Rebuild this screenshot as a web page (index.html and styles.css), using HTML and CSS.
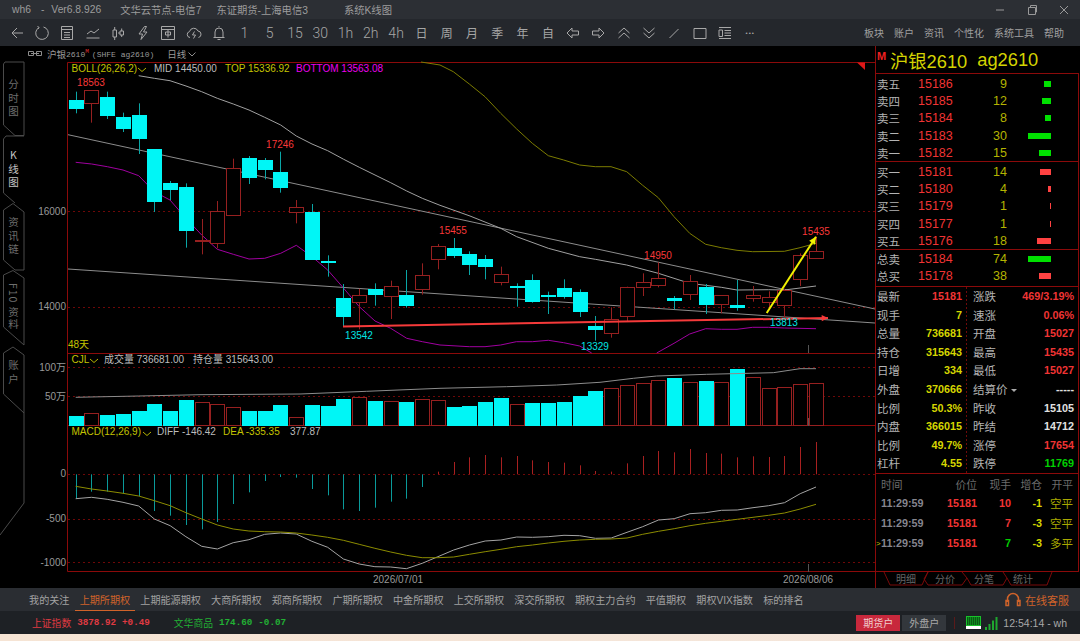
FILE: index.html
```html
<!DOCTYPE html>
<html lang="zh-CN">

<head>
    <meta charset="UTF-8">
    <meta name="viewport" content="width=device-width, initial-scale=1.0">
    <title>wh6 - 系统K线图</title>
    <link rel="stylesheet" href="styles.css">
</head>

<body>
    <div class="app">
        <header class="titlebar">
            <span class="app-name">wh6</span>
            <span class="app-dash">-</span>
            <span class="app-ver">Ver6.8.926</span>
            <span class="app-node">文华云节点-电信7</span>
            <span class="app-broker">东证期货-上海电信3</span>
            <span class="app-view">系统K线图</span>
            <div class="window-btns">
                <svg width="12" height="12" viewBox="0 0 12 12"><path d="M2 6h8" /></svg>
                <svg width="12" height="12" viewBox="0 0 12 12"><path d="M2.500 3.500h7v7h-7z M4.500 3.500v-2h6v6.500h-1" /></svg>
                <svg width="12" height="12" viewBox="0 0 12 12"><path d="M2 2l8 8M10 2l-8 8" /></svg>
            </div>
        </header>

        <nav class="toolbar">
            <a class="tool"><svg viewBox="0 0 16 16"><path d="M14 8H3M8 3 3 8l5 5" /></svg></a>
            <a class="tool"><svg viewBox="0 0 16 16"><path d="M5 2.600A6.300 6.300 0 1 0 9.500 2M3.500 1l1.500 1.600-1 1.400" /></svg></a>
            <a class="tool"><svg viewBox="0 0 16 16"><path d="M2.500 1.500h11v13h-11zM2.500 4.500h11M5 7.500h6M5 10h6M5 12.500h6" /></svg></a>
            <a class="tool"><svg viewBox="0 0 16 16"><path d="M2 9l4-3 3 2 5-4M1.500 13h13" /></svg></a>
            <a class="tool"><svg viewBox="0 0 16 16"><path d="M3 5h3.500v7H3zM4.700 2v3M4.700 12v3M10 6h3.500v4H10zM8 8h2M11.700 3.500V6M11.700 10v2" /></svg></a>
            <a class="tool"><svg viewBox="0 0 16 16"><path d="M9.500 1.500 4 9h3.500l-1.500 5.500L12 7H8.500l3-5.500z" /></svg></a>
            <a class="tool"><svg viewBox="0 0 16 16"><path d="M1.500 1.500h13v13h-13zM1.500 4.500h13M8 4.500v8M5.500 7h5v3h-5z" /></svg></a>
            <a class="tool"><svg viewBox="0 0 16 16"><path d="M4 12.500A3 3 0 0 1 3.500 6.600 4.500 4.500 0 0 1 12 6a3.300 3.300 0 0 1 .5 6.500M8.500 6.500 6.500 10h3L7.500 13.500" /></svg></a>
            <a class="tool"><svg viewBox="0 0 16 16"><path d="M4 12V7a4 4 0 0 1 8 0v5M2.500 12.500h11M6.500 14.500h3M8 2V1.200" /></svg></a>
            <a class="tool period">1</a>
            <a class="tool period">5</a>
            <a class="tool period">15</a>
            <a class="tool period">30</a>
            <a class="tool period">1h</a>
            <a class="tool period">2h</a>
            <a class="tool period">4h</a>
            <a class="tool cycle">日</a>
            <a class="tool cycle">周</a>
            <a class="tool cycle">月</a>
            <a class="tool cycle">季</a>
            <a class="tool cycle">年</a>
            <a class="tool cycle">自</a>
            <a class="tool"><svg viewBox="0 0 16 16"><path d="M7 3 2 8l5 5v-3h6.500V6H7z" /></svg></a>
            <a class="tool"><svg viewBox="0 0 16 16"><path d="M9 3l5 5-5 5v-3H2.500V6H9z" /></svg></a>
            <a class="tool"><svg viewBox="0 0 16 16"><path d="M2.500 8 8 3l5.500 5M2.500 13 8 8l5.500 5" /></svg></a>
            <a class="tool"><svg viewBox="0 0 16 16"><path d="M2.500 3 8 8l5.500-5M2.500 8 8 13l5.500-5" /></svg></a>
            <a class="tool"><svg viewBox="0 0 16 16"><path d="M3.500 13 12.500 4" /></svg></a>
            <a class="tool"><svg viewBox="0 0 16 16"><path d="M2 3.500h12v10H2z" /></svg></a>
            <a class="tool"><svg viewBox="0 0 16 16"><path d="M2 2.500h12M2 13.500h12M2 5v6.500h3.500V5zM7.500 5.500H14M7.500 8H14M7.500 10.500H14" /></svg></a>
            <a class="tool dots">•••</a>
            <div class="menu">
                <a>板块</a><a>账户</a><a>资讯</a><a>个性化</a><a>系统工具</a><a>帮助</a>
            </div>
        </nav>

        <main class="workspace">
            <section class="chart-area">
                <svg id="chart" class="chart-canvas" width="875" height="542" viewBox="0 46 875 542"></svg>
                <div class="symbol-bar">
                    <svg class="link-icon" width="14" height="8" viewBox="0 0 14 8"><path d="M.5 1.500h5v4h-5zM8.500 1.500h5v4h-5zM3 3.500h8" /></svg>
                    <span class="cn">沪银</span><span>2610</span><span class="m-flag">M</span>
                    <span class="sym-code">(SHFE ag2610)</span>
                    <span class="cn period-name">日线</span>
                    <svg class="chev" width="8" height="5" viewBox="0 0 8 5"><path d="M.5.500 4 4 7.500.500" /></svg>
                </div>
                <div class="side-tabs">
                    <div class="side-tab tab-1">分时图</div>
                    <div class="side-tab tab-2 active">K线图</div>
                    <div class="side-tab tab-3">资讯链</div>
                    <div class="side-tab tab-4">F10 资料</div>
                    <div class="side-tab tab-5">账户</div>
                </div>
            </section>

            <aside class="quote">
                <div class="quote-title"><b class="m-mark">M</b><span>沪银2610</span><span>ag2610</span></div>

                <div class="book">
                    <div class="book-row"><span>卖五</span><span class="red">15186</span><span class="yel">9</span><i class="bar g" style="width:7px"></i></div>
                    <div class="book-row"><span>卖四</span><span class="red">15185</span><span class="yel">12</span><i class="bar g" style="width:9px"></i></div>
                    <div class="book-row"><span>卖三</span><span class="red">15184</span><span class="yel">8</span><i class="bar g" style="width:6px"></i></div>
                    <div class="book-row"><span>卖二</span><span class="red">15183</span><span class="yel">30</span><i class="bar g" style="width:23px"></i></div>
                    <div class="book-row"><span>卖一</span><span class="red">15182</span><span class="yel">15</span><i class="bar g" style="width:12px"></i></div>
                </div>
                <div class="book">
                    <div class="book-row"><span>买一</span><span class="red">15181</span><span class="yel">14</span><i class="bar r" style="width:11px"></i></div>
                    <div class="book-row"><span>买二</span><span class="red">15180</span><span class="yel">4</span><i class="bar r" style="width:3px"></i></div>
                    <div class="book-row"><span>买三</span><span class="red">15179</span><span class="yel">1</span><i class="bar r" style="width:1px"></i></div>
                    <div class="book-row"><span>买四</span><span class="red">15177</span><span class="yel">1</span><i class="bar r" style="width:1px"></i></div>
                    <div class="book-row"><span>买五</span><span class="red">15176</span><span class="yel">18</span><i class="bar r" style="width:14px"></i></div>
                </div>
                <div class="book book-total">
                    <div class="book-row"><span>总卖</span><span class="red">15184</span><span class="yel">74</span><i class="bar g" style="width:23px"></i></div>
                    <div class="book-row"><span>总买</span><span class="red">15178</span><span class="yel">38</span><i class="bar r" style="width:12px"></i></div>
                </div>

                <div class="stats">
                    <div class="stat"><span>最新</span><b class="red">15181</b></div>
                    <div class="stat"><span>涨跌</span><b class="red">469/3.19%</b></div>
                    <div class="stat"><span>现手</span><b class="lime">7</b></div>
                    <div class="stat"><span>速涨</span><b class="red">0.06%</b></div>
                    <div class="stat"><span>总量</span><b class="lime">736681</b></div>
                    <div class="stat"><span>开盘</span><b class="red">15027</b></div>
                    <div class="stat"><span>持仓</span><b class="lime">315643</b></div>
                    <div class="stat"><span>最高</span><b class="red">15435</b></div>
                    <div class="stat"><span>日增</span><b class="lime">334</b></div>
                    <div class="stat"><span>最低</span><b class="red">15027</b></div>
                    <div class="stat"><span>外盘</span><b class="lime">370666</b></div>
                    <div class="stat"><span>结算价<i class="caret"></i></span><b class="white">-----</b></div>
                    <div class="stat"><span>比例</span><b class="lime">50.3%</b></div>
                    <div class="stat"><span>昨收</span><b class="white">15105</b></div>
                    <div class="stat"><span>内盘</span><b class="lime">366015</b></div>
                    <div class="stat"><span>昨结</span><b class="white">14712</b></div>
                    <div class="stat"><span>比例</span><b class="lime">49.7%</b></div>
                    <div class="stat"><span>涨停</span><b class="red">17654</b></div>
                    <div class="stat"><span>杠杆</span><b class="lime">4.55</b></div>
                    <div class="stat"><span>跌停</span><b class="green">11769</b></div>
                </div>

                <div class="ticks">
                    <div class="tick-head"><span>时间</span><span>价位</span><span>现手</span><span>增仓</span><span>开平</span></div>
                    <div class="tick-row"><b class="tick-time">11:29:59</b><b class="red">15181</b><b class="red">10</b><b class="lime">-1</b><span class="kp">空平</span></div>
                    <div class="tick-row"><b class="tick-time">11:29:59</b><b class="red">15181</b><b class="red">7</b><b class="lime">-3</b><span class="kp">空平</span></div>
                    <div class="tick-row"><em class="tick-mark">&gt;</em><b class="tick-time">11:29:59</b><b class="red">15181</b><b class="green">7</b><b class="lime">-3</b><span class="kp">多平</span></div>
                </div>

                <div class="detail-tabs">
                    <svg class="detail-outline" width="205" height="16" viewBox="0 0 205 16"><path d="M8 0l6 13h32l6-13M52 0l-4 7 4 6h34l5-7M86 0l5 6 4 7h32l4-7M127 0l4 6 4 7h36l5-13" /></svg>
                    <span>明细</span><span>分价</span><span>分笔</span><span>统计</span>
                </div>
            </aside>
        </main>

        <nav class="market-tabs">
            <a>我的关注</a>
            <a class="on">上期所期权</a>
            <a>上期能源期权</a>
            <a>大商所期权</a>
            <a>郑商所期权</a>
            <a>广期所期权</a>
            <a>中金所期权</a>
            <a>上交所期权</a>
            <a>深交所期权</a>
            <a>期权主力合约</a>
            <a>平值期权</a>
            <a>期权VIX指数</a>
            <a>标的排名</a>
            <div class="online">
                <svg width="16" height="16" viewBox="0 0 16 16"><path d="M2.500 10V7a5.500 5.500 0 0 1 11 0v3M1 8.500h2.500v5H1zM12.500 8.500H15v5h-2.500z" /></svg>
                <span>在线客服</span>
            </div>
        </nav>

        <footer class="statusbar">
            <div class="ticker up"><span class="cn">上证指数</span><span>3878.92</span><span>+0.49</span></div>
            <div class="ticker down"><span class="cn">文华商品</span><span>174.60</span><span>-0.07</span></div>
            <div class="status-right">
                <a class="acct on">期货户</a>
                <a class="acct">外盘户</a>
                <i class="status-sep"></i>
                <i class="monitor"></i>
                <svg class="signal" width="13" height="14" viewBox="0 0 13 14"><path d="M0 11h2v3H0zM3.500 8h2v6h-2zM7 4.500h2V14H7zM10.500 1h2v13h-2z" /></svg>
                <span class="clock">12:54:14 - wh</span>
            </div>
        </footer>
        <div class="desktop-strip"></div>
    </div>
    <script src="chart.js"></script>
</body>

</html>
```

FILE: styles.css
```css
* {
    box-sizing: border-box;
}

html,
body {
    margin: 0;
    height: 100%;
    background: #000;
    overflow: hidden;
}

body {
    font-family: "Liberation Sans", "Noto Sans CJK SC", sans-serif;
    color: #aaa;
}

a {
    cursor: pointer;
}

.app {
    display: flex;
    flex-direction: column;
    width: 1080px;
    height: 641px;
}

/* title bar */
.titlebar {
    display: flex;
    align-items: center;
    height: 19px;
    padding-left: 12px;
    background: #2c2f34;
    font-size: 10.300px;
    color: #9c9c9c;
    flex: none;
}

.app-dash {
    margin-left: 10px;
}

.app-ver {
    margin-left: 7px;
}

.app-node {
    margin-left: 19px;
}

.app-broker {
    margin-left: 15px;
}

.app-view {
    margin-left: 36px;
}

.window-btns {
    display: flex;
    gap: 20px;
    margin-left: auto;
    padding-right: 10px;
}

.window-btns svg {
    fill: none;
    stroke: #999;
}

/* tool bar */
.toolbar {
    display: flex;
    align-items: center;
    height: 27px;
    padding-left: 4px;
    background: #24272c;
    flex: none;
}

.tool {
    display: flex;
    align-items: center;
    justify-content: center;
    width: 25.3px;
    height: 27px;
    flex: none;
    color: #a6a6a6;
}

.tool svg {
    width: 16px;
    height: 16px;
    fill: none;
    stroke: #a8a8a8;
}

.period {
    font-family: Roboto, sans-serif;
    font-weight: 300;
    font-size: 14px;
}

.cycle {
    font-size: 12px;
}

.dots {
    font-size: 6px;
    letter-spacing: 1px;
}

.menu {
    display: flex;
    gap: 10px;
    margin-left: auto;
    padding-right: 16px;
    font-size: 10px;
    color: #a0a0a0;
}

/* main */
.workspace {
    display: flex;
    height: 542px;
    flex: none;
    background: #000;
}

.chart-area {
    position: relative;
    width: 875px;
    flex: none;
}

.chart-canvas {
    position: absolute;
    left: 0;
    top: 0;
    font-family: "Liberation Sans", "Noto Sans CJK SC", sans-serif;
}

.chart-canvas text {
    font-size: 10px;
    dominant-baseline: middle;
}

.t-grey { fill: #bcbcbc; }
.t-axis { fill: #999; }
.t-yellow { fill: #c4c400; }
.t-magenta { fill: #ee00ee; }
.t-red { fill: #f83838; }
.t-cyan { fill: #00e4e4; }

.symbol-bar {
    position: relative;
    display: flex;
    align-items: center;
    height: 16px;
    padding-left: 28px;
    font-family: "Liberation Mono", "Noto Sans CJK SC", monospace;
    font-size: 8px;
    color: #999;
}

.link-icon {
    margin-right: 5px;
    fill: none;
    stroke: #8c8c8c;
}

.symbol-bar .cn {
    font-family: "Noto Sans CJK SC", sans-serif;
    font-size: 9.5px;
}

.m-flag {
    position: relative;
    top: -3px;
    font-size: 6px;
    color: #e03030;
    margin-right: 3px;
}

.period-name {
    margin-left: 13px;
}

.chev {
    margin-left: 2px;
    fill: none;
    stroke: #8c8c8c;
}

/* left vertical tabs */
.side-tabs {
    position: absolute;
    left: 3px;
    top: 0;
    width: 21px;
    font-family: "Noto Sans CJK SC", sans-serif;
    font-size: 10.5px;
    color: #6e6e6e;
}

.side-tab {
    position: absolute;
    left: 0;
    width: 21px;
    writing-mode: vertical-rl;
    text-orientation: upright;
    line-height: 21px;
    letter-spacing: 3px;
    white-space: nowrap;
}

.side-tab.active {
    color: #c4c4c4;
}

.tab-1 { top: 33px; }
.tab-2 { top: 104px; }
.tab-3 { top: 171px; }
.tab-4 {
    top: 237px;
    text-orientation: mixed;
    letter-spacing: 1px;
}
.tab-5 { top: 314px; }

/* right quote panel */
.quote {
    display: flex;
    flex-direction: column;
    width: 205px;
    border-left: 1px solid #8b0a0a;
    font-size: 11px;
    color: #bdbdbd;
}

.red { color: #f03434; }
.yel { color: #b4b400; }
.lime { color: #d6d600; }
.white { color: #e0e0e0; }
.green { color: #00d000; }

.quote-title {
    position: relative;
    display: flex;
    align-items: center;
    gap: 10px;
    height: 27px;
    padding: 1px 0 0 14px;
    font-family: "Liberation Sans", "Noto Sans CJK SC", sans-serif;
    font-size: 18.300px;
    color: #d4d400;
}

.m-mark {
    position: absolute;
    left: 1px;
    top: 4px;
    font-size: 11px;
    color: #ee2020;
}

.book {
    width: 203px;
    height: 88px;
    padding-top: 1px;
    border-top: 1px solid #8b0a0a;
    border-right: 1px solid #8b0a0a;
}

.book-total {
    height: 37px;
    padding-top: 0;
}

.book-row {
    display: grid;
    grid-template-columns: 41px 36px 53px 44px;
    align-items: center;
    height: 17.400px;
    padding-left: 1px;
    font-size: 12.500px;
}

.book-row span:first-child {
    font-size: 11.500px;
    font-family: "Noto Sans CJK SC", sans-serif;
    color: #b4b4b4;
}

.book-row span:nth-child(3) {
    text-align: right;
}

.bar {
    justify-self: end;
    height: 6px;
}

.bar.g { background: #00e000; }
.bar.r { background: #ff4242; }

.stats {
    position: relative;
    display: grid;
    grid-template-columns: 91px 111px;
    grid-auto-rows: 18.550px;
    width: 203px;
    height: 187px;
    border-top: 1px solid #8b0a0a;
    border-right: 1px solid #8b0a0a;
    background: repeating-linear-gradient(#6e0a0a 0 2px, transparent 2px 4px) 90px 0 / 1px 100% no-repeat;
}

.stat {
    display: flex;
    align-items: center;
    justify-content: space-between;
    padding: 0 5px 0 1px;
    font-size: 10.800px;
}

.stat:nth-child(even) {
    padding: 0 4px 0 6px;
}

.stat span {
    font-family: "Noto Sans CJK SC", sans-serif;
    font-size: 11.500px;
    color: #b4b4b4;
}

.caret {
    display: inline-block;
    margin-left: 3px;
    border: 3px solid transparent;
    border-top: 3px solid #aaa;
    border-bottom: 0;
    vertical-align: middle;
}

.ticks {
    width: 203px;
    height: 99px;
    border-top: 1px solid #8b0a0a;
    border-right: 1px solid #8b0a0a;
    border-bottom: 1px solid #8b0a0a;
}

.tick-head,
.tick-row {
    position: relative;
    display: grid;
    grid-template-columns: 46px 50px 34px 31px 31px;
    align-items: center;
    padding-left: 5px;
    height: 20px;
    font-size: 10.800px;
}

.tick-head span,
.tick-row > :not(.tick-time) {
    text-align: right;
}

.tick-head {
    height: 19px;
    font-family: "Noto Sans CJK SC", sans-serif;
    color: #6c6c6c;
}

.tick-head span:first-child {
    text-align: left;
}

.tick-time {
    color: #85858f;
}

.kp {
    font-family: "Noto Sans CJK SC", sans-serif;
    font-size: 11.500px;
    color: #a8a800;
}

.tick-row .tick-mark {
    position: absolute;
    left: 0;
    font-style: normal;
    font-size: 8px;
    color: #c8c800;
}

.detail-tabs {
    position: relative;
    display: flex;
    height: 16px;
    padding-left: 20px;
    font-family: "Noto Sans CJK SC", sans-serif;
    font-size: 10px;
    line-height: 14px;
    color: #666;
}

.detail-tabs span {
    position: relative;
    width: 39px;
}

.detail-outline {
    position: absolute;
    left: 0;
    top: 0;
    fill: none;
    stroke: #7a0a0a;
}

/* exchange tabs */
.market-tabs {
    display: flex;
    align-items: stretch;
    height: 23px;
    padding-left: 24px;
    background: #2a2d32;
    font-size: 10.100px;
    color: #a2a2a2;
    flex: none;
}

.market-tabs > a {
    display: flex;
    align-items: center;
    padding: 0 5.100px;
    white-space: nowrap;
}

.market-tabs > a.on {
    color: #d0632a;
    border-bottom: 1px solid #d0632a;
}

.online {
    display: flex;
    align-items: center;
    gap: 4px;
    margin-left: auto;
    padding-right: 11px;
    font-size: 11px;
    color: #d0632a;
}

.online svg {
    fill: none;
    stroke: #d0632a;
    stroke-width: 1.500;
}

/* status bar */
.statusbar {
    display: flex;
    align-items: center;
    height: 23px;
    padding-left: 32px;
    background: #1e2125;
    flex: none;
    font-family: "Liberation Mono", "Noto Sans CJK SC", monospace;
    font-size: 9.250px;
    font-weight: bold;
}

.ticker {
    display: flex;
    align-items: center;
    gap: 6px;
}

.ticker .cn {
    font-family: "Noto Sans CJK SC", sans-serif;
    font-size: 9.800px;
    font-weight: normal;
}

.ticker.up { color: #e03a42; }
.ticker.down {
    margin-left: 24px;
    color: #22b034;
}

.status-right {
    display: flex;
    align-items: center;
    margin-left: auto;
    font-weight: normal;
}

.acct {
    display: flex;
    align-items: center;
    justify-content: center;
    width: 44px;
    height: 16px;
    margin-right: 2px;
    background: #33373c;
    font-family: "Noto Sans CJK SC", sans-serif;
    font-size: 10px;
    color: #a8a8a8;
}

.acct.on {
    background: #c8283c;
    color: #f0d0d0;
}

.status-sep {
    width: 1px;
    height: 12px;
    margin: 0 11px 0 6px;
    background: #5a1a1a;
}

.monitor {
    width: 15px;
    height: 13px;
    border-bottom: 3px solid #fff;
    background: repeating-linear-gradient(90deg, #0f8a1e 0 1px, #0a5a14 1px 2px);
    box-shadow: inset 0 0 0 1px #17c22a;
}

.signal {
    margin-left: 4px;
    fill: #1fa82f;
}

.clock {
    margin: 0 13px 0 5px;
    font-family: "Liberation Sans", sans-serif;
    font-size: 10.500px;
    color: #a8a8a8;
}

.desktop-strip {
    flex: 1;
    background: linear-gradient(90deg, #f6e4d4, #f4e6dc);
}
```

FILE: chart.js
```js
const svg = document.getElementById("chart");
const STEP = 15.75;
const FIRST_X = 75.7;
const RED_EDGE = "#962020";
const candleX = i => FIRST_X + i * STEP;
// sampled values are in thirds of a pixel, measured from the panel top
const py = v => 60 + v / 3;
const vy = v => 340 + v / 3;

// [wick top, body top, body bottom, wick bottom, up?]
const candles = [
    [95, 120, 143, 160, 0], [90, 90, 130, 188, 1], [95, 110, 164, 177, 0], [158, 171, 205, 216, 0],
    [130, 164, 232, 282, 0], [268, 268, 425, 456, 0], [363, 369, 387, 420, 0], [370, 381, 509, 563, 0],
    [477, 539, 541, 583, 1], [423, 454, 551, 565, 1], [296, 325, 465, 465, 1], [288, 294, 350, 372, 0],
    [294, 301, 328, 358, 0], [275, 337, 382, 398, 0], [420, 442, 456, 490, 1], [432, 456, 597, 597, 0],
    [586, 603, 605, 650, 0], [672, 713, 767, 800, 0], [686, 706, 726, 808, 1], [670, 687, 701, 737, 0],
    [662, 679, 710, 777, 1], [630, 705, 734, 743, 0], [610, 644, 686, 704, 1], [552, 559, 599, 628, 1],
    [534, 565, 585, 594, 0], [574, 583, 613, 645, 0], [585, 597, 617, 658, 0], [620, 643, 668, 676, 1],
    [670, 678, 680, 740, 0], [643, 659, 722, 728, 0], [695, 706, 709, 762, 0], [658, 685, 708, 716, 0],
    [688, 695, 753, 771, 0], [768, 799, 809, 842, 0], [742, 778, 819, 833, 1], [680, 682, 769, 785, 1],
    [640, 667, 682, 708, 1], [607, 655, 676, 682, 1], [708, 714, 721, 748, 0], [645, 663, 701, 720, 1],
    [672, 680, 732, 762, 0], [706, 706, 734, 760, 1], [660, 734, 740, 752, 0], [678, 706, 714, 725, 1],
    [694, 712, 728, 748, 1], [686, 690, 734, 775, 1], [580, 585, 657, 678, 1], [530, 574, 596, 596, 1]
];

// [bar top, up?]
const volumes = [
    [229, 0], [220, 1], [225, 0], [222, 0], [212, 0], [192, 0], [212, 0], [180, 0], [187, 1], [193, 1],
    [201, 1], [212, 0], [214, 0], [195, 0], [231, 1], [195, 0], [198, 0], [178, 0], [170, 1], [183, 0],
    [184, 1], [185, 0], [178, 1], [181, 1], [202, 0], [197, 0], [187, 0], [174, 0], [193, 1], [189, 0],
    [190, 0], [185, 0], [168, 0], [152, 0], [143, 1], [136, 1], [130, 1], [121, 1], [114, 0], [127, 1],
    [122, 0], [127, 1], [86, 0], [112, 1], [144, 1], [142, 1], [133, 1], [128, 1]
];

const macdBars = [
    475, 455, 455, 460, 468, 513, 527, 555, 568, 546, 492, 457, 423, 411, 413, 447, 466, 508, 513, 503, 485, 476, 441, 395,
    366, 352, 345, 352, 348, 361, 366, 368, 376, 393, 395, 370, 348, 333, 337, 327, 339, 341, 352, 349, 351, 348, 321, 306
];

const diffLine = [
    476, 472, 478, 487, 498, 537, 557, 590, 619, 627, 608, 599, 583, 579, 582, 604, 622, 657, 672, 680, 681, 686, 670, 650,
    630, 615, 603, 600, 591, 592, 590, 586, 587, 595, 594, 577, 560, 540, 536, 521, 518, 511, 510, 503, 497, 488, 461, 441
];

const deaLine = [
    439, 447, 453, 460, 468, 482, 497, 518, 537, 555, 567, 573, 575, 576, 579, 585, 592, 601, 613, 625, 636, 646, 653, 653,
    651, 643, 635, 628, 620, 615, 609, 604, 600, 598, 597, 594, 583, 574, 566, 557, 550, 544, 538, 532, 526, 519, 507, 493
];

// [x, y] in thirds of a pixel, left and right half of the chart
const midLine = [
    [416, 47], [463, 55], [510, 62], [558, 78], [605, 95], [652, 115], [700, 132], [747, 150], [794, 172], [842, 195],
    [889, 228], [936, 252], [983, 272], [1031, 298], [1078, 322], [1125, 345], [1172, 368], [1220, 393], [1267, 415], [1320, 436]
];
const midLine2 = [
    [0, 436], [90, 468], [182, 505], [230, 530], [325, 565], [419, 590], [466, 598], [560, 615], [655, 640], [702, 655],
    [749, 670], [844, 682], [891, 690], [985, 689], [1033, 690], [1128, 678]
];
const topLine2 = [
    [-57, 6], [0, 15], [40, 35], [88, 72], [135, 110], [182, 160], [230, 207], [277, 250], [325, 287], [371, 300], [419, 315],
    [466, 320], [513, 320], [560, 335], [607, 375], [655, 413], [702, 470], [749, 520], [797, 553], [844, 563], [891, 571],
    [938, 575], [1033, 574], [1080, 563], [1128, 550]
];
const bottomLine = [
    [227, 307], [275, 312], [322, 320], [369, 330], [416, 347], [463, 395], [510, 420], [558, 475], [605, 525], [652, 568],
    [700, 583], [747, 597], [794, 595], [842, 580], [889, 556], [936, 590], [983, 630], [1031, 685], [1078, 740], [1125, 783],
    [1172, 805], [1220, 835], [1267, 845], [1320, 855]
];
const bottomLine2a = [[0, 855], [88, 860], [135, 860], [182, 855], [229, 845], [277, 845], [325, 841], [371, 848], [419, 858], [455, 879]];
const bottomLine2b = [
    [650, 879], [702, 850], [749, 822], [797, 806], [844, 808], [891, 808], [938, 802], [985, 802], [1033, 804], [1128, 806]
];
const volLine = [
    [227, 172], [416, 168], [600, 164], [900, 162], [1100, 154], [1320, 145]
];
const volLine2 = [
    [0, 145], [200, 140], [350, 135], [480, 127], [580, 115], [650, 108], [800, 103], [1000, 98], [1080, 86], [1128, 86]
];

let out = "";

function poly(points, color, width) {
    const d = points.map(p => p[0].toFixed(1) + "," + p[1].toFixed(1)).join(" ");
    out += `<polyline points="${d}" fill="none" stroke="${color}" stroke-width="${width || 1}"/>`;
}

function label(x, y, str, cls, anchor) {
    out += `<text x="${x}" y="${y}" class="${cls}" text-anchor="${anchor || "start"}">${str}</text>`;
}

const left = pts => pts.map(p => [p[0] / 3, py(p[1])]);
const right = pts => pts.map(p => [440 + p[0] / 3, py(p[1])]);
const volLeft = pts => pts.map(p => [p[0] / 3, vy(p[1])]);
const volRight = pts => pts.map(p => [440 + p[0] / 3, vy(p[1])]);
const series = arr => arr.map((v, i) => [candleX(i), vy(v)]);

function drawSideTabs() {
    const tabs = [
        "M3.500 64V125L15 135.500H24V62H5z",
        "M24 136H6L3.500 139V193L15 203",
        "M3.500 210 13 203.500 24 212V270H15L3.500 260z",
        "M3.500 275 13 270.500 24 278V345L3.500 327z",
        "M3.500 353 13 347 24 355V413L3.500 394z",
        "M24 413V503L0 535"
    ];
    out += `<path d="${tabs.join("")}" fill="none" stroke="#4a4a4a"/>`;
}

function drawFrame() {
    const dash = 'stroke="#6e0808" stroke-dasharray="2 3"';
    [211.5, 307.5, 367.5, 396.5, 474.5, 519.5, 562.5].forEach(y => {
        out += `<line x1="68" y1="${y}" x2="875" y2="${y}" ${dash}/>`;
    });
    const frame = 'stroke="#8b0a0a"';
    out += `<path d="M67.500 62.500H875M67.500 62.500V571.500H875M68 353.500H875M68 425.500H875" fill="none" ${frame}/>`;
    out += '<path d="M857 62.500H865V70z" fill="#e01818"/>';
    out += '<path d="M808.500 345V353M808.500 418V426M808.500 564V572" stroke="#555"/>';
}

function drawCandles() {
    candles.forEach((c, i) => {
        const x = Math.round(candleX(i)) + 0.5;
        const up = c[4];
        const wick = up ? RED_EDGE : "#0aa6a6";
        out += `<line x1="${x}" y1="${py(c[0])}" x2="${x}" y2="${py(c[3])}" stroke="${wick}"/>`;
        const top = Math.round(py(c[1])) + 0.5;
        const h = Math.max(1, Math.round((c[2] - c[1]) / 3));
        const fill = up ? "#000" : "#00f6f6";
        const edge = up ? RED_EDGE : "#00f6f6";
        out += `<rect x="${x - 7}" y="${top}" width="14" height="${h}" fill="${fill}" stroke="${edge}"/>`;
    });
}

function drawVolumes() {
    volumes.forEach((v, i) => {
        const x = Math.round(candleX(i)) + 0.5;
        const top = Math.round(vy(v[0])) + 0.5;
        const fill = v[1] ? "#000" : "#00f6f6";
        const edge = v[1] ? RED_EDGE : "#00f6f6";
        out += `<rect x="${x - 7}" y="${top}" width="14" height="${425.5 - top}" fill="${fill}" stroke="${edge}"/>`;
    });
}

function drawMacd() {
    const zero = vy(403);
    macdBars.forEach((v, i) => {
        const x = Math.round(candleX(i)) + 0.5;
        const color = v > 403 ? "#0a9a9a" : "#a82020";
        out += `<line x1="${x}" y1="${zero}" x2="${x}" y2="${vy(v)}" stroke="${color}"/>`;
    });
    poly(series(diffLine), "#a4a4a4");
    poly(series(deaLine), "#8c8c00");
}

function drawArrow(x1, y1, x2, y2, color, width, size) {
    out += `<line x1="${x1}" y1="${y1}" x2="${x2}" y2="${y2}" stroke="${color}" stroke-width="${width}"/>`;
    const a = Math.atan2(y2 - y1, x2 - x1);
    const p1 = [x2 - size * Math.cos(a - 0.45), y2 - size * Math.sin(a - 0.45)];
    const p2 = [x2 - size * Math.cos(a + 0.45), y2 - size * Math.sin(a + 0.45)];
    out += `<polygon points="${x2},${y2} ${p1.join(",")} ${p2.join(",")}" fill="${color}"/>`;
}

function drawTexts() {
    label(71.5, 69, "BOLL(26,26,2)", "t-yellow");
    label(154, 69, "MID 14450.00", "t-grey");
    label(225, 69, "TOP 15336.92", "t-yellow");
    label(296, 69, "BOTTOM 13563.08", "t-magenta");

    label(71.5, 360, "CJL", "t-yellow");
    label(104, 360, "成交量 736681.00", "t-grey");
    label(193, 360, "持仓量 315643.00", "t-grey");

    label(71.5, 432.5, "MACD(12,26,9)", "t-yellow");
    label(157, 432.5, "DIFF -146.42", "t-grey");
    label(223, 432.5, "DEA -335.35", "t-yellow");
    label(290, 432.5, "377.87", "t-grey");

    label(66, 212, "16000", "t-axis", "end");
    label(66, 307.5, "14000", "t-axis", "end");
    label(66, 368, "100万", "t-axis", "end");
    label(66, 397, "50万", "t-axis", "end");
    label(66, 474.5, "0", "t-axis", "end");
    label(66, 519.5, "-500", "t-axis", "end");
    label(66, 563, "-1000", "t-axis", "end");
    label(68, 345.5, "48天", "t-yellow");

    label(91, 83, "18563", "t-red", "middle");
    label(280, 145.5, "17246", "t-red", "middle");
    label(453, 231.5, "15455", "t-red", "middle");
    label(658, 256, "14950", "t-red", "middle");
    label(816, 232, "15435", "t-red", "middle");
    label(359, 336.5, "13542", "t-cyan", "middle");
    label(595, 347, "13329", "t-cyan", "middle");
    label(784, 323, "13813", "t-cyan", "middle");

    label(398, 580, "2026/07/01", "t-axis", "middle");
    label(808, 580, "2026/08/06", "t-axis", "middle");
}

function chevron(x, y) {
    out += `<path d="M${x} ${y}l4 3.500 4-3.500" fill="none" stroke="#b4b400"/>`;
}

drawSideTabs();
drawFrame();
// hand drawn trend lines
out += '<line x1="68" y1="134.700" x2="875" y2="309" stroke="#8c8c8c"/>';
out += '<line x1="68" y1="269" x2="875" y2="323" stroke="#8c8c8c"/>';
poly(left(midLine), "#a0a0a0");
poly(right(midLine2), "#a0a0a0");
poly(right(topLine2), "#7c7c00");
poly(left(bottomLine), "#a000a0");
poly(right(bottomLine2a), "#a000a0");
poly(right(bottomLine2b), "#a000a0");
drawCandles();
drawVolumes();
poly(volLeft(volLine), "#8c8c8c");
poly(volRight(volLine2), "#8c8c8c");
drawMacd();
drawArrow(343, 326.5, 828, 318, "#f53a3a", 2, 7);
drawArrow(766.7, 313, 816, 236.7, "#f0f000", 2, 8);
drawTexts();
chevron(138, 68);
chevron(90, 359);
chevron(143, 432);
svg.innerHTML = out;
```
